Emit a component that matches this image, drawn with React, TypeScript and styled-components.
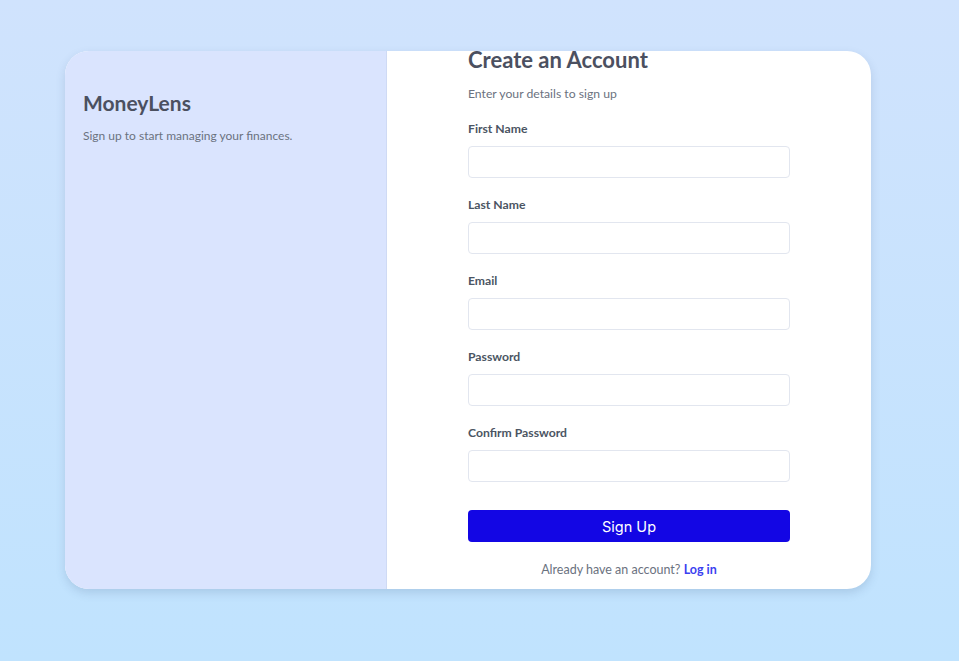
import React from "react";
import styled, { createGlobalStyle } from "styled-components";

const Global = createGlobalStyle`
  html, body { margin: 0; padding: 0; }
  body {
    min-height: 661px;
    background: linear-gradient(180deg, #d0e3fd 0%, #c0e3fe 100%);
    font-family: "Lato", "Noto Sans", sans-serif;
  }
`;

const Page = styled.div`
  padding: 51px 0 0 65px;
  min-height: 661px;
  box-sizing: border-box;
`;

const Card = styled.div`
  width: 806px;
  height: 538px;
  display: flex;
  border-radius: 24px;
  background: #ffffff;
  box-shadow: 0 4px 10px rgba(60, 90, 130, 0.18);
`;

const Side = styled.aside`
  width: 322px;
  box-sizing: border-box;
  background: #dae4fe;
  border-right: 1px solid #cfdaf4;
  border-radius: 24px 0 0 24px;
  padding: 40px 18px;
`;

const Brand = styled.h1`
  margin: 0;
  font-size: 21px;
  line-height: 24px;
  font-weight: 700;
  color: #4b5060;
`;

const Tagline = styled.p`
  margin: 13px 0 0;
  font-size: 12px;
  line-height: 16px;
  color: #6b7280;
`;

const Main = styled.main`
  flex: 1;
  display: flex;
  justify-content: center;
`;

const Form = styled.form`
  width: 322px;
  display: flex;
  flex-direction: column;
`;

const Title = styled.h2`
  margin: -2px 0 0;
  font-size: 22px;
  line-height: 22px;
  font-weight: 700;
  color: #4b5060;
`;

const Subtitle = styled.p`
  margin: 15px 0 19px;
  font-size: 12.2px;
  line-height: 16px;
  color: #6b7280;
`;

const Field = styled.div`
  display: flex;
  flex-direction: column;
  margin-bottom: 19px;
`;

const Label = styled.label`
  font-size: 12.2px;
  line-height: 16px;
  font-weight: 700;
  color: #4b5563;
  margin-bottom: 9px;
`;

const Input = styled.input`
  height: 32px;
  box-sizing: border-box;
  border: 1px solid #e2e6ef;
  border-radius: 4px;
  background: #ffffff;
  outline: none;
`;

const Button = styled.button`
  margin-top: 9px;
  height: 32px;
  border: none;
  border-radius: 4px;
  background: #1306e4;
  color: #ffffff;
  font-family: "Inter", "Liberation Sans", sans-serif;
  font-size: 14.5px;
`;

const Footer = styled.p`
  margin: 20px 0 0;
  text-align: center;
  font-size: 12.5px;
  line-height: 16px;
  color: #6b7280;
`;

const LoginLink = styled.a`
  color: #3b3ff0;
  font-weight: 700;
  text-decoration: none;
`;

const fields = ["First Name", "Last Name", "Email", "Password", "Confirm Password"];

export default function App() {
  return (
    <>
      <Global />
      <Page>
        <Card>
          <Side>
            <Brand>MoneyLens</Brand>
            <Tagline>Sign up to start managing your finances.</Tagline>
          </Side>
          <Main>
            <Form onSubmit={(e) => e.preventDefault()}>
              <Title>Create an Account</Title>
              <Subtitle>Enter your details to sign up</Subtitle>
              {fields.map((f) => (
                <Field key={f}>
                  <Label>{f}</Label>
                  <Input type={f.includes("Password") ? "password" : f === "Email" ? "email" : "text"} />
                </Field>
              ))}
              <Button type="submit">Sign Up</Button>
              <Footer>
                Already have an account? <LoginLink href="#">Log in</LoginLink>
              </Footer>
            </Form>
          </Main>
        </Card>
      </Page>
    </>
  );
}
